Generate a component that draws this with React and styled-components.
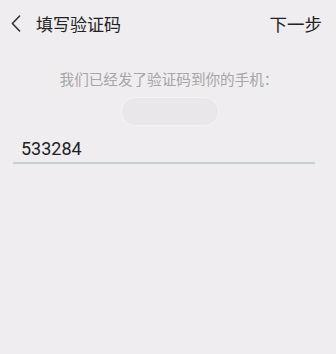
import React from 'react';
import styled, { createGlobalStyle } from 'styled-components';

const GlobalStyle = createGlobalStyle`
  html, body {
    margin: 0;
    padding: 0;
    background: #efedf0;
  }
  body {
    font-family: Roboto, "Noto Sans CJK SC", sans-serif;
  }
`;

const Page = styled.div`
  width: 336px;
  height: 354px;
  background: #efedf0;
  display: flex;
  flex-direction: column;
`;

const Header = styled.div`
  height: 46px;
  display: flex;
  align-items: center;
  padding: 0 14px 0 11px;
`;

const BackButton = styled.button`
  border: none;
  background: none;
  padding: 0;
  width: 10px;
  height: 18px;
  display: flex;
  align-items: center;
  justify-content: center;
`;

const Title = styled.h1`
  margin: 0 0 0 15px;
  font-size: 17px;
  font-weight: 400;
  color: #222;
  flex: 1;
`;

const NextLink = styled.span`
  font-size: 17.5px;
  color: #222;
`;

const Body = styled.div`
  display: flex;
  flex-direction: column;
  align-items: center;
  padding-top: 24px;
`;

const Hint = styled.p`
  margin: 0 0 0 2px;
  font-size: 14.6px;
  line-height: 20px;
  color: #a6a5a7;
`;

const PhonePill = styled.div`
  margin-top: 8px;
  width: 96px;
  height: 27px;
  border-radius: 14px;
  background: #e9e7ea;
  box-shadow: 0 0 0 1px #f3f2f4;
  margin-left: 4px;
`;

const CodeField = styled.div`
  align-self: stretch;
  margin: 10px 21px 0 13px;
  border-bottom: 2px solid #c8d1cf;
`;

const CodeInput = styled.input`
  width: 100%;
  box-sizing: border-box;
  height: 27px;
  border: none;
  outline: none;
  background: transparent;
  padding: 0 0 0 8px;
  font-family: Roboto, sans-serif;
  font-size: 18px;
  color: #222;
`;

export default function App() {
  return (
    <Page>
      <GlobalStyle />
      <Header>
        <BackButton>
          <svg width="10" height="17" viewBox="0 0 10 17">
            <path
              d="M8.6 1 L1.4 8.5 L8.6 16"
              fill="none"
              stroke="#333"
              strokeWidth="1.6"
              strokeLinecap="round"
              strokeLinejoin="round"
            />
          </svg>
        </BackButton>
        <Title>填写验证码</Title>
        <NextLink>下一步</NextLink>
      </Header>
      <Body>
        <Hint>我们已经发了验证码到你的手机：</Hint>
        <PhonePill />
        <CodeField>
          <CodeInput defaultValue="533284" readOnly />
        </CodeField>
      </Body>
    </Page>
  );
}
